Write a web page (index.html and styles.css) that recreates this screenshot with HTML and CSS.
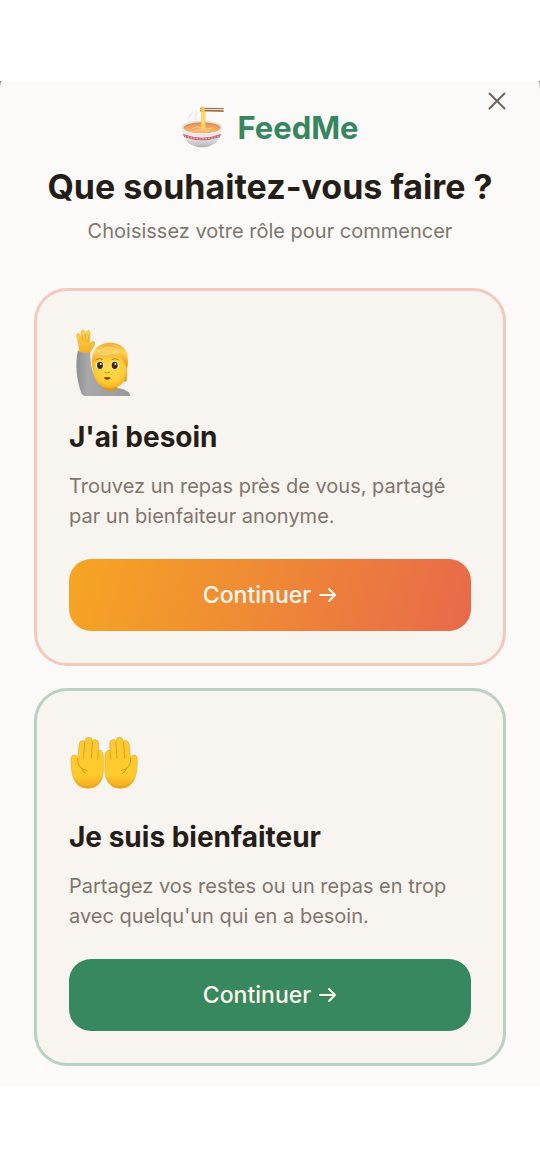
FILE: index.html
```html
<!DOCTYPE html>
<html lang="fr">
<head>
<meta charset="utf-8">
<meta name="viewport" content="width=device-width, initial-scale=1">
<title>FeedMe</title>
<link rel="stylesheet" href="styles.css">
</head>
<body>
<div class="backdrop">
<main class="sheet">
  <button class="close" type="button" aria-label="Fermer">
    <svg viewBox="0 0 18 18" width="18" height="18" aria-hidden="true"><path d="M1.5 1.5 16.5 16.5M16.5 1.5 1.5 16.5" fill="none" stroke="#6f665e" stroke-width="2" stroke-linecap="round"/></svg>
  </button>
  <header class="header">
    <div class="brand">
      <svg class="brand-icon" viewBox="36 33 132 132" aria-hidden="true">
        <defs>
          <linearGradient id="bowl" x1="0" y1="0" x2="0" y2="1"><stop offset="0" stop-color="#f4f3f4"/><stop offset=".6" stop-color="#e4e3e5"/><stop offset="1" stop-color="#bfbdbf"/></linearGradient>
          <linearGradient id="soup" x1="0" y1="0" x2="0" y2="1"><stop offset="0" stop-color="#ee9450"/><stop offset="1" stop-color="#fbb873"/></linearGradient>
        </defs>
        <path d="M62 80q-8-10 0-17t8-11M82 76q-7-10-1-16t0-11" fill="none" stroke="#eeeceb" stroke-width="6" stroke-linecap="round"/>
        <path d="M73 144h52v7q-8 6-26 6t-26-6z" fill="#b5b3b5"/>
        <path d="M38 96C39 126 55 150 77 152h44c22-2 38-26 39-56z" fill="url(#bowl)"/>
        <ellipse cx="99" cy="96" rx="61" ry="19" fill="#e3e2e4"/>
        <ellipse cx="99" cy="98" rx="55" ry="16" fill="#db8750"/>
        <ellipse cx="99" cy="100" rx="53" ry="14" fill="url(#soup)"/>
        <path d="M70 100q14-8 29-1t34-2M76 107q20-6 30-1t18-2" fill="none" stroke="#fdcd8c" stroke-width="3"/>
        <path d="M42 117q57 22 114 0l-4 10q-53 18-106 0z" fill="#d0606c"/>
        <path d="M47 123q52 17 104 0" fill="none" stroke="#f0d9da" stroke-width="3" stroke-dasharray="4 5"/>
        <path d="M96 40h13l1 62q-7 5-14 0z" fill="#f5cf55"/>
        <path d="M100 42v60M105 42v59" stroke="#ffe995" stroke-width="2"/>
        <path d="M93 38l71 1v4H93z" fill="#a47748"/><path d="M93 45l71 1v4l-71-1z" fill="#805b35"/>
        <path d="M95 37h13v14H95z" fill="#ecc650"/>
      </svg>
      <span class="brand-name">FeedMe</span>
    </div>
    <h1 class="title">Que souhaitez-vous faire ?</h1>
    <p class="subtitle">Choisissez votre rôle pour commencer</p>
  </header>
  <div class="roles">
    <section class="card card-need">
      <svg class="card-icon" viewBox="-9 -9 240 240" aria-hidden="true">
        <defs>
          <linearGradient id="sleeve" x1="0" y1="0" x2="1" y2="0"><stop offset="0" stop-color="#8f8f92"/><stop offset=".2" stop-color="#a9a9ac"/><stop offset="1" stop-color="#98989b"/></linearGradient>
          <radialGradient id="face" cx=".5" cy=".4" r=".65"><stop offset="0" stop-color="#ffdf4d"/><stop offset=".65" stop-color="#fecd35"/><stop offset="1" stop-color="#efa41f"/></radialGradient>
          <linearGradient id="hair" x1="0" y1="0" x2="0" y2="1"><stop offset="0" stop-color="#f3ad35"/><stop offset=".25" stop-color="#ffd35f"/><stop offset=".6" stop-color="#f6b434"/><stop offset="1" stop-color="#e39116"/></linearGradient>
          <linearGradient id="palm" x1="0" y1="0" x2="0" y2="1"><stop offset="0" stop-color="#ffd64b"/><stop offset="1" stop-color="#f3b026"/></linearGradient>
        </defs>
        <path d="M17 76q22-6 38 0c-1 34 4 62 21 88q15 17 33 22 50-5 66 20v4H39q-7-1-10-7C12 160 10 112 17 76z" fill="url(#sleeve)"/>
        <path d="M93 172h43v18q-21 11-43 0z" fill="#df971b"/>
        <path d="M21 76q1-11-1-20l-6-28q1-8 8-4l6 16-1-24q6-8 11-1l3 23 3-22q7-6 10 2l-1 27q0 6 2 9 5-11 12-7 4 5-3 17-8 10-9 14-17 5-34-2z" fill="url(#palm)" stroke="#f0b22f" stroke-width="2" stroke-linejoin="round"/>
        <path d="M30 28l3 19M40 25l1 21M50 29l-2 18" fill="none" stroke="#e0a225" stroke-width="2" stroke-linecap="round"/>
        <path d="M63 132C50 86 69 52 112 50c43-1 62 29 55 65q-3 12-2 25l-1 24q-10 7-20-5l-74-8z" fill="url(#hair)"/>
        <path d="M64 115q3-12 10-21 25 8 74-4l15 21q3 19 0 34c-4 27-23 42-49 42-27 0-46-18-50-46q-2-14 0-26z" fill="url(#face)"/>
        <path d="M61 112q0-38 31-51 47-17 75 45 1 9-2 19-5-17-17-28-7-6-11-8-25 9-57 1-9 9-19 22z" fill="url(#hair)"/>
        <path d="M78 76q25-19 58-6M85 84q29 4 52-7" fill="none" stroke="#ffe399" stroke-width="4" stroke-linecap="round" opacity=".65"/>
        <ellipse cx="84" cy="118" rx="12" ry="12" fill="#fff7dc"/><ellipse cx="129" cy="118" rx="12" ry="12" fill="#fff7dc"/>
        <ellipse cx="84" cy="118" rx="9" ry="11" fill="#42240e"/><ellipse cx="128" cy="118" rx="9" ry="11" fill="#42240e"/>
        <circle cx="86" cy="114" r="3" fill="#fff"/><circle cx="130" cy="114" r="3" fill="#fff"/>
        <path d="M73 101q9-6 19-1M120 100q10-5 19 1" fill="none" stroke="#c27b16" stroke-width="3" stroke-linecap="round"/>
        <path d="M99 139q7 5 14 0" fill="none" stroke="#d18312" stroke-width="3" stroke-linecap="round"/>
        <path d="M95 155q11-4 22 0-11 12-22 0z" fill="#844020"/>
      </svg>
      <h2 class="card-title">J'ai besoin</h2>
      <p class="card-text">Trouvez un repas près de vous, partagé par un bienfaiteur anonyme.</p>
      <button class="action action-need" type="button">Continuer
        <svg class="arrow" viewBox="0 0 18 18" aria-hidden="true"><path d="M1 9h15M10 3l6 6-6 6"/></svg>
      </button>
    </section>
    <section class="card card-give">
      <svg class="card-icon" viewBox="3 -30 240 240" aria-hidden="true">
        <defs>
          <linearGradient id="hand" x1="0" y1="0" x2="0" y2="1"><stop offset="0" stop-color="#fdc934"/><stop offset=".75" stop-color="#ffcb2b"/><stop offset="1" stop-color="#efa920"/></linearGradient>
          <g id="open-hand">
            <path d="M10 74q1-8 9-8 8 1 11 9l3-38q1-13 9-14 6-1 8 3 3-13 12-13 11 0 11 12 3-7 10-5 9 1 9 13l-1 19q10-2 13 8 2 7 2 15v35c0 36-18 56-46 56-32 0-44-23-48-49-3-16-3-32-2-43z" fill="url(#hand)" stroke="#e8aa25" stroke-width="2" stroke-linejoin="round"/>
            <path d="M50 27l-3 49M73 27l-3 49M91 53l-2 25" fill="none" stroke="#e0a01f" stroke-width="3" stroke-linecap="round"/>
            <path d="M29 76q-1 18 7 26 7 8 21 11M42 108q3 11 11 12" fill="none" stroke="#d6961e" stroke-width="3" stroke-linecap="round"/>
            <path d="M20 138q15 25 43 24 26-2 36-28" fill="none" stroke="#cf8c1c" stroke-width="3" opacity=".35"/>
          </g>
        </defs>
        <use href="#open-hand"/>
        <use href="#open-hand" transform="translate(217 0) scale(-1 1)"/>
      </svg>
      <h2 class="card-title">Je suis bienfaiteur</h2>
      <p class="card-text">Partagez vos restes ou un repas en trop avec quelqu'un qui en a besoin.</p>
      <button class="action action-give" type="button">Continuer
        <svg class="arrow" viewBox="0 0 18 18" aria-hidden="true"><path d="M1 9h15M10 3l6 6-6 6"/></svg>
      </button>
    </section>
  </div>
</main>
</div>
</body>
</html>
```
FILE: styles.css
```css
* {
  box-sizing: border-box;
}

body {
  margin: 0;
  padding: 81px 0;
  background: #fff;
  color: #251e18;
  font-family: Inter, "Liberation Sans", sans-serif;
}

h1, h2, p {
  margin: 0;
}

.backdrop {
  background: linear-gradient(#8b8b8b 8px, #fcfaf8 8px);
}

.sheet {
  position: relative;
  padding: 25px 34px 21px;
  background: #fcfaf8;
  border-radius: 2px 2px 0 0 / 8px 8px 0 0;
}

.close {
  position: absolute;
  top: 4px;
  right: 27px;
  display: grid;
  place-items: center;
  width: 32px;
  height: 32px;
  padding: 0;
  border: 0;
  background: none;
  cursor: pointer;
}

.header {
  display: flex;
  flex-direction: column;
  align-items: center;
  text-align: center;
}

.brand {
  display: flex;
  align-items: center;
  gap: 12px;
}

.brand-icon {
  width: 44px;
  height: 44px;
}

.brand-name {
  color: #36865f;
  font-size: 31px;
  font-weight: 700;
  line-height: 44px;
}

.title {
  margin-top: 15px;
  font-size: 34px;
  font-weight: 700;
  line-height: 44px;
}

.subtitle {
  margin-top: 7px;
  color: #80756d;
  font-size: 20px;
  line-height: 30px;
}

.roles {
  display: grid;
  gap: 22px;
  margin-top: 42px;
}

.card {
  padding: 32px;
  border: 3px solid;
  border-radius: 33px;
  background: #f8f4ef;
}

.card-need {
  border-color: #f3c9bc;
}

.card-give {
  border-color: #b9d1c2;
}

.card-icon {
  display: block;
  width: 80px;
  height: 80px;
}

.card-title {
  margin-top: 14px;
  font-size: 28px;
  font-weight: 700;
  line-height: 40px;
}

.card-text {
  margin-top: 14px;
  color: #80756d;
  font-size: 20px;
  line-height: 30px;
}

.action {
  display: flex;
  align-items: center;
  justify-content: center;
  gap: 8px;
  width: 100%;
  height: 72px;
  margin-top: 28px;
  padding: 0;
  border: 0;
  border-radius: 22px;
  color: #fff8ee;
  font: 500 23px/30px Inter, "Liberation Sans", sans-serif;
  cursor: pointer;
}

.action-need {
  background: linear-gradient(105deg, #f5a623, #e8694a);
}

.action-give {
  background: #37875f;
}

.arrow {
  width: 18px;
  height: 18px;
  fill: none;
  stroke: currentColor;
  stroke-width: 2;
  stroke-linecap: round;
  stroke-linejoin: round;
}
```
